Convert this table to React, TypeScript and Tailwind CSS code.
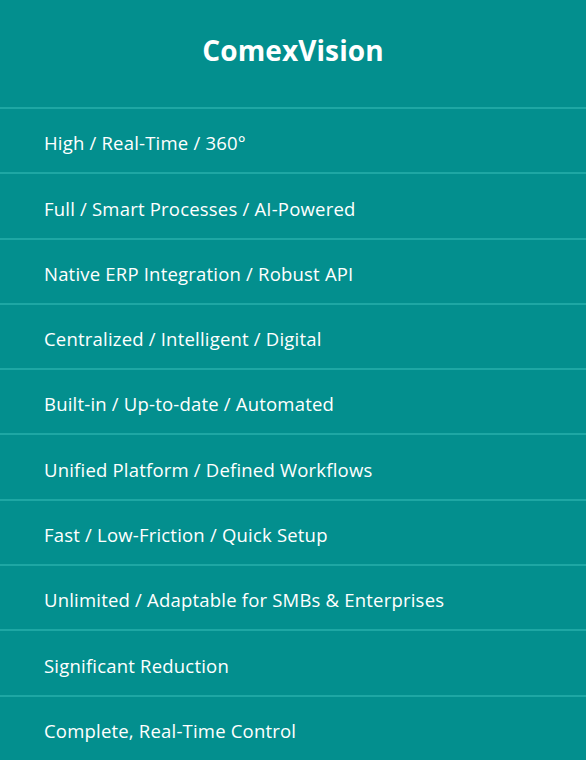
const rows = [
  "High / Real-Time / 360°",
  "Full / Smart Processes / AI-Powered",
  "Native ERP Integration / Robust API",
  "Centralized / Intelligent / Digital",
  "Built-in / Up-to-date / Automated",
  "Unified Platform / Defined Workflows",
  "Fast / Low-Friction / Quick Setup",
  "Unlimited / Adaptable for SMBs & Enterprises",
  "Significant Reduction",
  "Complete, Real-Time Control",
];

export default function App() {
  return (
    <div
      className="w-[586px] h-[760px] bg-[#038f8e] text-white flex flex-col overflow-hidden"
      style={{ fontFamily: "'Open Sans', 'Noto Sans', sans-serif" }}
    >
      <div className="h-[107px] shrink-0 flex items-center justify-center">
        <h1 className="text-[28px] font-bold mb-[7px] tracking-[0.1px]">ComexVision</h1>
      </div>
      {rows.map((r) => (
        <div
          key={r}
          className="flex-1 border-t-2 border-[#1ea7a4] flex items-center pl-[44px] pt-[5px] text-[18.5px] tracking-[0.2px]"
        >
          {r}
        </div>
      ))}
    </div>
  );
}
